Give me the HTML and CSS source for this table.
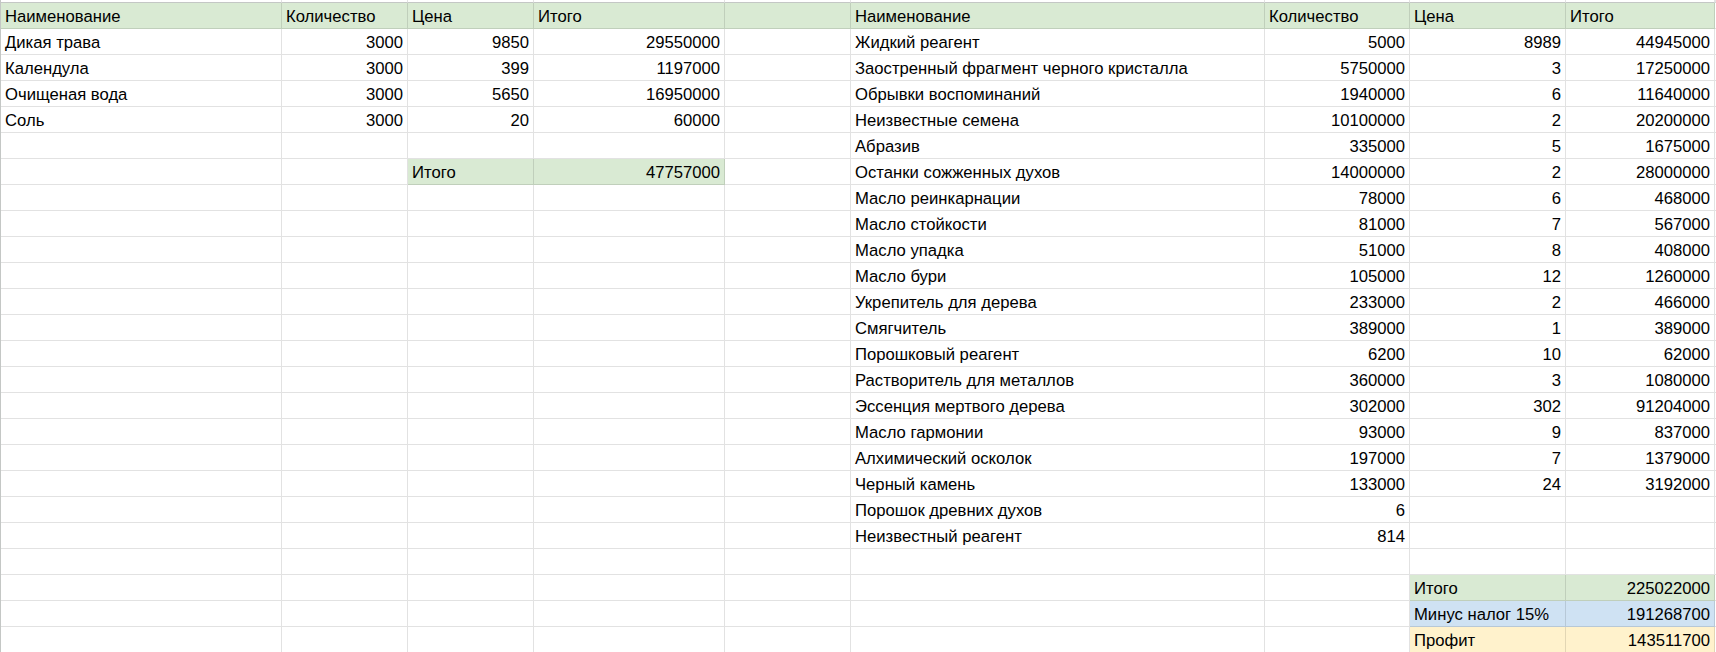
FILE: index.html
```html
<!DOCTYPE html>
<html lang="ru">
<head>
<meta charset="utf-8">
<title>Лист</title>
<link rel="stylesheet" href="styles.css">
</head>
<body>
<div class="sheet">
  <div class="row top"><div class="c"></div><div class="c"></div><div class="c"></div><div class="c"></div><div class="c"></div><div class="c"></div><div class="c"></div><div class="c"></div><div class="c"></div><div class="c"></div></div>
  <div class="row"><div class="c g">Наименование</div><div class="c g">Количество</div><div class="c g">Цена</div><div class="c g">Итого</div><div class="c g"></div><div class="c g">Наименование</div><div class="c g">Количество</div><div class="c g">Цена</div><div class="c g">Итого</div><div class="c"></div></div>
  <div class="row"><div class="c">Дикая трава</div><div class="c n">3000</div><div class="c n">9850</div><div class="c n">29550000</div><div class="c"></div><div class="c">Жидкий реагент</div><div class="c n">5000</div><div class="c n">8989</div><div class="c n">44945000</div><div class="c"></div></div>
  <div class="row"><div class="c">Календула</div><div class="c n">3000</div><div class="c n">399</div><div class="c n">1197000</div><div class="c"></div><div class="c">Заостренный фрагмент черного кристалла</div><div class="c n">5750000</div><div class="c n">3</div><div class="c n">17250000</div><div class="c"></div></div>
  <div class="row"><div class="c">Очищеная вода</div><div class="c n">3000</div><div class="c n">5650</div><div class="c n">16950000</div><div class="c"></div><div class="c">Обрывки воспоминаний</div><div class="c n">1940000</div><div class="c n">6</div><div class="c n">11640000</div><div class="c"></div></div>
  <div class="row"><div class="c">Соль</div><div class="c n">3000</div><div class="c n">20</div><div class="c n">60000</div><div class="c"></div><div class="c">Неизвестные семена</div><div class="c n">10100000</div><div class="c n">2</div><div class="c n">20200000</div><div class="c"></div></div>
  <div class="row"><div class="c"></div><div class="c"></div><div class="c"></div><div class="c"></div><div class="c"></div><div class="c">Абразив</div><div class="c n">335000</div><div class="c n">5</div><div class="c n">1675000</div><div class="c"></div></div>
  <div class="row"><div class="c"></div><div class="c"></div><div class="c g">Итого</div><div class="c g n">47757000</div><div class="c"></div><div class="c">Останки сожженных духов</div><div class="c n">14000000</div><div class="c n">2</div><div class="c n">28000000</div><div class="c"></div></div>
  <div class="row"><div class="c"></div><div class="c"></div><div class="c"></div><div class="c"></div><div class="c"></div><div class="c">Масло реинкарнации</div><div class="c n">78000</div><div class="c n">6</div><div class="c n">468000</div><div class="c"></div></div>
  <div class="row"><div class="c"></div><div class="c"></div><div class="c"></div><div class="c"></div><div class="c"></div><div class="c">Масло стойкости</div><div class="c n">81000</div><div class="c n">7</div><div class="c n">567000</div><div class="c"></div></div>
  <div class="row"><div class="c"></div><div class="c"></div><div class="c"></div><div class="c"></div><div class="c"></div><div class="c">Масло упадка</div><div class="c n">51000</div><div class="c n">8</div><div class="c n">408000</div><div class="c"></div></div>
  <div class="row"><div class="c"></div><div class="c"></div><div class="c"></div><div class="c"></div><div class="c"></div><div class="c">Масло бури</div><div class="c n">105000</div><div class="c n">12</div><div class="c n">1260000</div><div class="c"></div></div>
  <div class="row"><div class="c"></div><div class="c"></div><div class="c"></div><div class="c"></div><div class="c"></div><div class="c">Укрепитель для дерева</div><div class="c n">233000</div><div class="c n">2</div><div class="c n">466000</div><div class="c"></div></div>
  <div class="row"><div class="c"></div><div class="c"></div><div class="c"></div><div class="c"></div><div class="c"></div><div class="c">Смягчитель</div><div class="c n">389000</div><div class="c n">1</div><div class="c n">389000</div><div class="c"></div></div>
  <div class="row"><div class="c"></div><div class="c"></div><div class="c"></div><div class="c"></div><div class="c"></div><div class="c">Порошковый реагент</div><div class="c n">6200</div><div class="c n">10</div><div class="c n">62000</div><div class="c"></div></div>
  <div class="row"><div class="c"></div><div class="c"></div><div class="c"></div><div class="c"></div><div class="c"></div><div class="c">Растворитель для металлов</div><div class="c n">360000</div><div class="c n">3</div><div class="c n">1080000</div><div class="c"></div></div>
  <div class="row"><div class="c"></div><div class="c"></div><div class="c"></div><div class="c"></div><div class="c"></div><div class="c">Эссенция мертвого дерева</div><div class="c n">302000</div><div class="c n">302</div><div class="c n">91204000</div><div class="c"></div></div>
  <div class="row"><div class="c"></div><div class="c"></div><div class="c"></div><div class="c"></div><div class="c"></div><div class="c">Масло гармонии</div><div class="c n">93000</div><div class="c n">9</div><div class="c n">837000</div><div class="c"></div></div>
  <div class="row"><div class="c"></div><div class="c"></div><div class="c"></div><div class="c"></div><div class="c"></div><div class="c">Алхимический осколок</div><div class="c n">197000</div><div class="c n">7</div><div class="c n">1379000</div><div class="c"></div></div>
  <div class="row"><div class="c"></div><div class="c"></div><div class="c"></div><div class="c"></div><div class="c"></div><div class="c">Черный камень</div><div class="c n">133000</div><div class="c n">24</div><div class="c n">3192000</div><div class="c"></div></div>
  <div class="row"><div class="c"></div><div class="c"></div><div class="c"></div><div class="c"></div><div class="c"></div><div class="c">Порошок древних духов</div><div class="c n">6</div><div class="c"></div><div class="c"></div><div class="c"></div></div>
  <div class="row"><div class="c"></div><div class="c"></div><div class="c"></div><div class="c"></div><div class="c"></div><div class="c">Неизвестный реагент</div><div class="c n">814</div><div class="c"></div><div class="c"></div><div class="c"></div></div>
  <div class="row"><div class="c"></div><div class="c"></div><div class="c"></div><div class="c"></div><div class="c"></div><div class="c"></div><div class="c"></div><div class="c"></div><div class="c"></div><div class="c"></div></div>
  <div class="row"><div class="c"></div><div class="c"></div><div class="c"></div><div class="c"></div><div class="c"></div><div class="c"></div><div class="c"></div><div class="c g">Итого</div><div class="c g n">225022000</div><div class="c"></div></div>
  <div class="row"><div class="c"></div><div class="c"></div><div class="c"></div><div class="c"></div><div class="c"></div><div class="c"></div><div class="c"></div><div class="c b">Минус налог 15%</div><div class="c b n">191268700</div><div class="c"></div></div>
  <div class="row"><div class="c"></div><div class="c"></div><div class="c"></div><div class="c"></div><div class="c"></div><div class="c"></div><div class="c"></div><div class="c y">Профит</div><div class="c y n">143511700</div><div class="c"></div></div>
</div>
</body>
</html>
```
FILE: styles.css
```css
html, body {
  margin: 0;
  padding: 0;
  background: #ffffff;
}
body {
  font-family: "Liberation Sans", Arial, sans-serif;
  font-size: 16.67px;
  color: #000000;
  overflow: hidden;
}
.sheet {
  border-left: 1px solid #c4c7c5;
  height: 652px;
  overflow: hidden;
}
.row {
  display: grid;
  grid-template-columns: 281px 126px 126px 191px 126px 414px 145px 156px 149px 1fr;
  height: 26px;
}
.row.top {
  height: 3px;
}
.c {
  box-sizing: border-box;
  border-right: 1px solid rgba(0, 0, 0, 0.115);
  border-bottom: 1px solid rgba(0, 0, 0, 0.115);
  padding: 2px 4px 0 4px;
  line-height: 23px;
  white-space: nowrap;
  overflow: hidden;
}
.row.top .c {
  padding: 0;
  border-bottom-color: #c4c7c5;
}
.n {
  text-align: right;
}
.g {
  background: #d9ead3;
}
.b {
  background: #cfe2f3;
}
.y {
  background: #fff2cc;
}
```
